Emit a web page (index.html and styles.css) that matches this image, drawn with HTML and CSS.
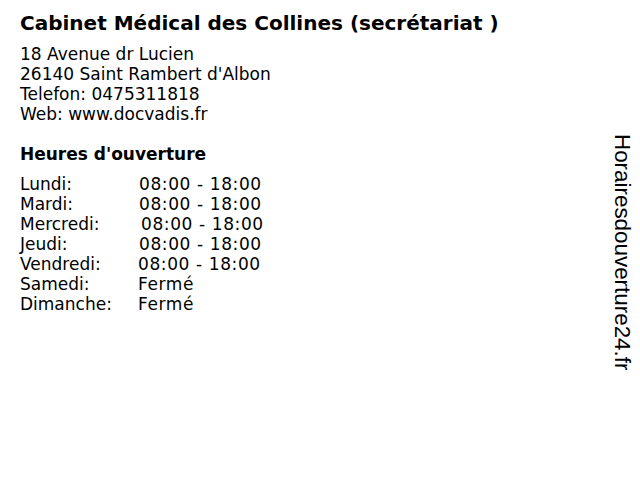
FILE: index.html
```html
<!DOCTYPE html>
<html lang="fr">
<head>
<meta charset="utf-8">
<link rel="stylesheet" href="styles.css">
</head>
<body>
<div class="page">
  <main class="content">
    <h1 class="title">Cabinet Médical des Collines (secrétariat )</h1>
    <div class="address">
      <div>18 Avenue dr Lucien</div>
      <div>26140 Saint Rambert d'Albon</div>
      <div>Telefon: 0475311818</div>
      <div>Web: www.docvadis.fr</div>
    </div>
    <h2 class="subtitle">Heures d'ouverture</h2>
    <div class="hours">
      <span class="day">Lundi:</span><span class="time">08:00 - 18:00</span>
      <span class="day">Mardi:</span><span class="time">08:00 - 18:00</span>
      <span class="day">Mercredi:</span><span class="time shift-r">08:00 - 18:00</span>
      <span class="day">Jeudi:</span><span class="time">08:00 - 18:00</span>
      <span class="day">Vendredi:</span><span class="time shift-l">08:00 - 18:00</span>
      <span class="day">Samedi:</span><span class="time shift-l">Fermé</span>
      <span class="day">Dimanche:</span><span class="time shift-l">Fermé</span>
    </div>
  </main>
  <aside class="brand"><span class="brand-text">Horairesdouverture24.fr</span></aside>
</div>
</body>
</html>
```
FILE: styles.css
```css
html, body {
  margin: 0;
  padding: 0;
  background: #ffffff;
}
body {
  font-family: "DejaVu Sans", Verdana, sans-serif;
  color: #000000;
  width: 640px;
  height: 480px;
  overflow: hidden;
}
.page {
  display: flex;
  justify-content: space-between;
  height: 480px;
}
.content {
  padding: 11px 0 0 20px;
}
.title {
  font-size: 20px;
  font-weight: bold;
  line-height: 24px;
  margin: 0 0 9px 0;
}
.address {
  font-size: 17px;
  line-height: 20px;
}
.subtitle {
  font-size: 17px;
  font-weight: bold;
  line-height: 20px;
  margin: 20px 0 10px 0;
}
.hours {
  display: grid;
  grid-template-columns: 119px auto;
  font-size: 17px;
  line-height: 20px;
}
.time {
  letter-spacing: 0.6px;
}
.shift-r {
  padding-left: 2px;
}
.shift-l {
  margin-left: -1px;
}
.brand {
  width: 40px;
  padding-top: 134px;
  display: flex;
  justify-content: center;
}
.brand-text {
  writing-mode: vertical-rl;
  font-family: "Liberation Sans", Arial, sans-serif;
  font-size: 22.4px;
  line-height: 24px;
  color: #000000;
  height: max-content;
  margin-left: 4px;
}
```
